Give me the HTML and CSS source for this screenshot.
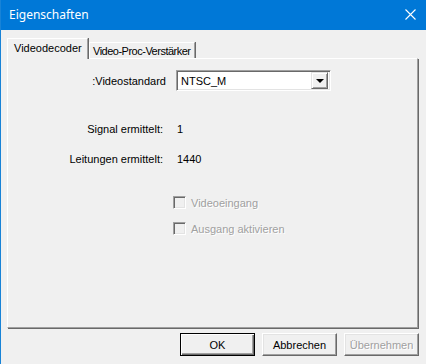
FILE: index.html
```html
<!DOCTYPE html>
<html>
<head>
<meta charset="utf-8">
<link rel="stylesheet" href="styles.css">
</head>
<body>
<div class="window">
  <div class="titlebar">
    <span class="title">Eigenschaften</span>
    <svg class="close" width="11" height="11" viewBox="0 0 11 11"><path d="M0.5 0.5L10.5 10.5M10.5 0.5L0.5 10.5" stroke="#fff" stroke-width="1.1" fill="none"/></svg>
  </div>
  <div class="content">
    <div class="tabs">
      <div class="tab selected">Videodecoder</div>
      <div class="tab other">Video-Proc-Verstärker</div>
    </div>
    <div class="panel">
      <div class="row row-std">
        <div class="label label-std">:Videostandard</div>
        <div class="combo">
          <span class="combo-text">NTSC_M</span>
          <span class="combo-btn"><span class="arrow"></span></span>
        </div>
      </div>
      <div class="row row-signal">
        <div class="label">Signal ermittelt:</div>
        <div class="value">1</div>
      </div>
      <div class="row row-lines">
        <div class="label">Leitungen ermittelt:</div>
        <div class="value">1440</div>
      </div>
      <div class="check check-first">
        <span class="box"></span><span class="disabled-text">Videoeingang</span>
      </div>
      <div class="check check-second">
        <span class="box"></span><span class="disabled-text">Ausgang aktivieren</span>
      </div>
    </div>
    <div class="buttons">
      <div class="btn default"><span>OK</span></div>
      <div class="btn"><span>Abbrechen</span></div>
      <div class="btn disabled"><span class="disabled-text">Übernehmen</span></div>
    </div>
  </div>
</div>
</body>
</html>
```

FILE: styles.css
```css
html, body {
  margin: 0;
  padding: 0;
}
body {
  width: 426px;
  height: 364px;
  background: #f0f0f0;
  font-family: "Liberation Sans", Arial, sans-serif;
  font-size: 11px;
  color: #000;
  overflow: hidden;
}
.window {
  width: 425px;
  height: 364px;
  border-left: 1px solid #1883d7;
  background: #f0f0f0;
  display: flex;
  flex-direction: column;
}
.titlebar {
  height: 30px;
  flex: none;
  background: #0078d7;
  display: flex;
  align-items: center;
  justify-content: space-between;
  padding: 0 10px 0 8px;
}
.title {
  color: #fff;
  font-family: "Noto Sans", "Open Sans", sans-serif;
  font-size: 12px;
  margin-top: -2px;
}
.close {
  display: block;
  margin-top: -1px;
}
.content {
  padding: 8px 6px 0 6px;
  display: flex;
  flex-direction: column;
}
.tabs {
  display: flex;
  align-items: flex-end;
  height: 20px;
  position: relative;
  z-index: 2;
}
.tab {
  box-sizing: border-box;
  border-top: 1px solid #fff;
  border-left: 1px solid #fff;
  border-right: 1px solid #a0a0a0;
  box-shadow: 1px 0 0 #696969;
  background: #f0f0f0;
  display: flex;
  align-items: center;
  line-height: 14px;
  white-space: nowrap;
}
.tab.selected {
  height: 21px;
  margin-bottom: -1px;
  padding: 0 6px 3px 6px;
  width: 81px;
  margin-right: 1px;
}
.tab.other {
  height: 16px;
  padding: 1px 3px 0 3px;
  letter-spacing: -0.5px;
}
.panel {
  height: 270px;
  box-sizing: border-box;
  border-top: 1px solid #fff;
  border-left: 1px solid #fff;
  border-right: 1px solid #a0a0a0;
  border-bottom: 1px solid #a0a0a0;
  box-shadow: 1px 1px 0 #696969;
  width: 411px;
  display: flex;
  flex-direction: column;
  position: relative;
  z-index: 1;
}
.row {
  display: flex;
  align-items: center;
}
.label {
  width: 155px;
  text-align: right;
  padding-right: 14px;
  line-height: 14px;
}
.label-std {
  width: 158px;
  padding-right: 10px;
}
.row-std {
  margin-top: 11px;
}
.row-signal {
  margin-top: 31px;
}
.row-lines {
  margin-top: 16px;
}
.value {
  line-height: 14px;
}
.combo {
  width: 155px;
  height: 21px;
  box-sizing: border-box;
  background: #fff;
  border-top: 1px solid #a0a0a0;
  border-left: 1px solid #a0a0a0;
  border-right: 1px solid #fff;
  border-bottom: 1px solid #fff;
  box-shadow: inset 1px 1px 0 #696969, inset -1px -1px 0 #e3e3e3;
  display: flex;
  align-items: center;
  justify-content: space-between;
  padding: 2px 2px 2px 4px;
}
.combo-text {
  line-height: 14px;
}
.combo-btn {
  width: 17px;
  height: 17px;
  box-sizing: border-box;
  background: #f0f0f0;
  border-top: 1px solid #e3e3e3;
  border-left: 1px solid #e3e3e3;
  border-right: 1px solid #696969;
  border-bottom: 1px solid #696969;
  box-shadow: inset 1px 1px 0 #fff, inset -1px -1px 0 #a0a0a0;
  display: flex;
  align-items: center;
  justify-content: center;
}
.arrow {
  width: 0;
  height: 0;
  border-left: 4px solid transparent;
  border-right: 4px solid transparent;
  border-top: 4px solid #000;
  margin-top: 1px;
}
.check {
  display: flex;
  align-items: center;
  padding-left: 165px;
  height: 13px;
}
.check-first {
  margin-top: 30px;
}
.check-second {
  margin-top: 13px;
}
.box {
  width: 13px;
  height: 13px;
  box-sizing: border-box;
  background: #f0f0f0;
  border-top: 1px solid #a0a0a0;
  border-left: 1px solid #a0a0a0;
  border-right: 1px solid #fff;
  border-bottom: 1px solid #fff;
  box-shadow: inset 1px 1px 0 #696969, inset -1px -1px 0 #e3e3e3;
  margin-right: 5px;
}
.disabled-text {
  color: #a0a0a0;
  text-shadow: 1px 1px 0 #fff;
  line-height: 14px;
}
.buttons {
  display: flex;
  justify-content: flex-end;
  gap: 7px;
  margin-top: 5px;
  padding-right: 1px;
}
.btn {
  width: 75px;
  height: 23px;
  box-sizing: border-box;
  background: #f0f0f0;
  border-top: 1px solid #fff;
  border-left: 1px solid #fff;
  border-right: 1px solid #696969;
  border-bottom: 1px solid #696969;
  box-shadow: inset -1px -1px 0 #a0a0a0, inset 1px 1px 0 #e3e3e3;
  display: flex;
  align-items: center;
  justify-content: center;
  line-height: 14px;
}
.btn.default {
  border: 1px solid #000;
  box-shadow: inset 1px 1px 0 #fff, inset -1px -1px 0 #696969, inset -2px -2px 0 #a0a0a0;
}
```
